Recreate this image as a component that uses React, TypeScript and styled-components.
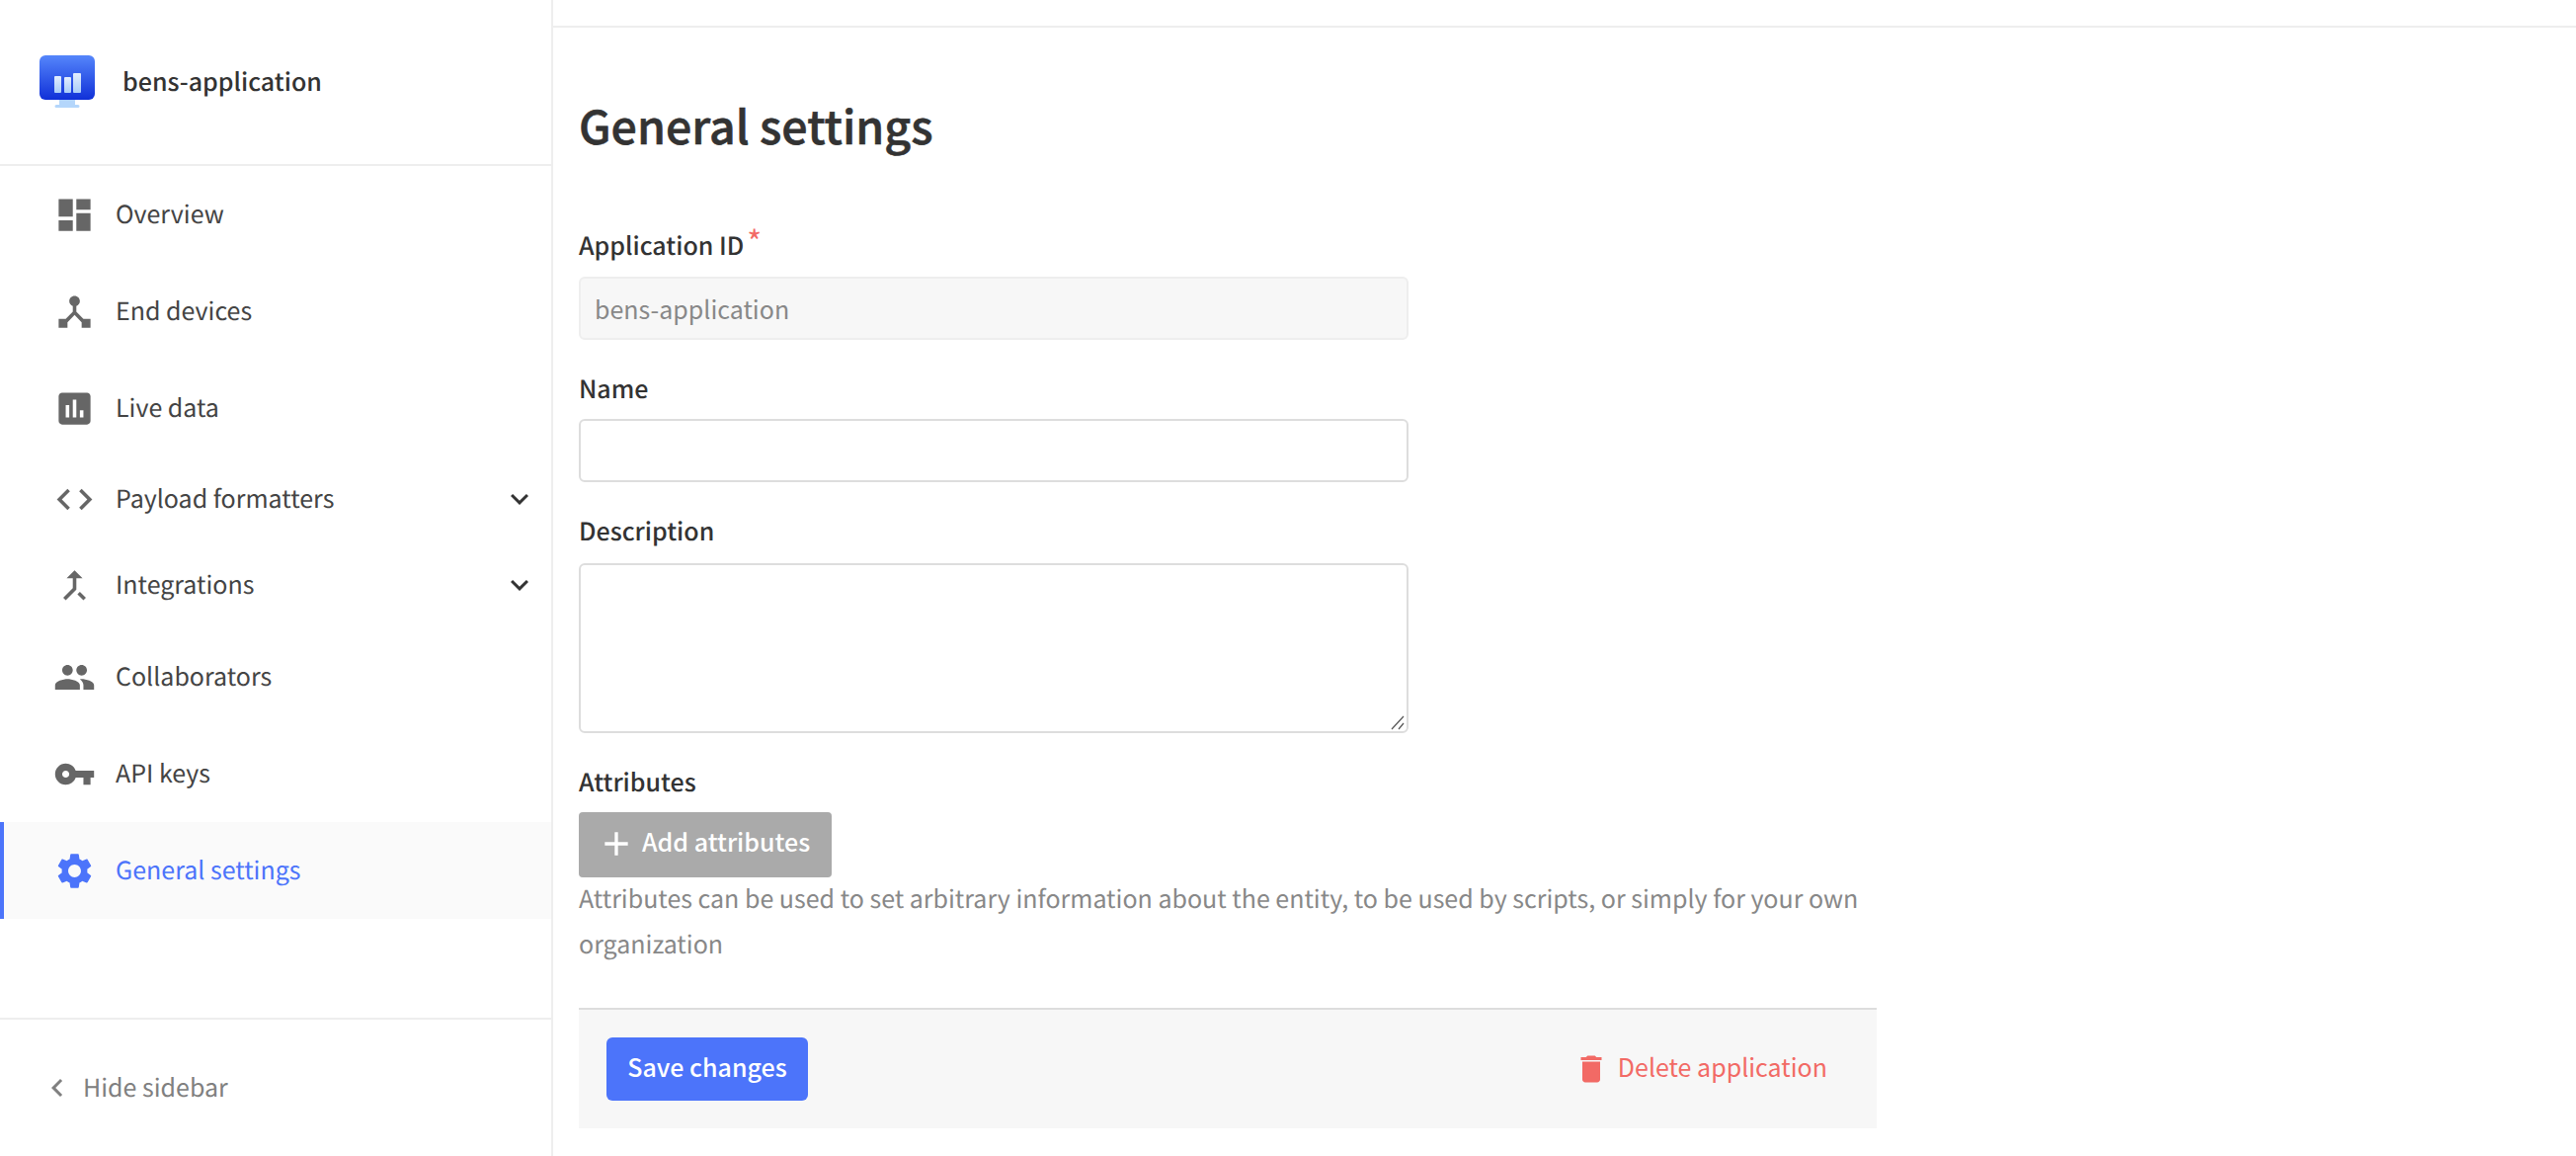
import React from "react";
import styled, { createGlobalStyle } from "styled-components";

const GlobalStyle = createGlobalStyle`
    html, body {
        margin: 0;
        padding: 0;
        background: #fff;
    }
    body {
        font-family: "Noto Sans CJK SC", "Noto Sans", sans-serif;
        font-size: 25px;
        color: #333;
        text-rendering: geometricPrecision;
    }
    * {
        box-sizing: border-box;
    }
`;

const ICONS = {
    dashboard: "M3 13h8V3H3v10zm0 8h8v-6H3v6zm10 0h8V11h-8v10zm0-18v6h8V3h-8z",
    hub: "M17 16l-4-4V8.82C14.16 8.4 15 7.3 15 6c0-1.66-1.34-3-3-3S9 4.34 9 6c0 1.3.84 2.4 2 2.82V12l-4 4H3v5h5v-3.05l4-4.2 4 4.2V21h5v-5h-4z",
    poll: "M19 3H5c-1.1 0-2 .9-2 2v14c0 1.1.9 2 2 2h14c1.1 0 2-.9 2-2V5c0-1.1-.9-2-2-2zM9 17H7v-7h2v7zm4 0h-2V7h2v10zm4 0h-2v-4h2v4z",
    code: "M9.4 16.6L4.8 12l4.6-4.6L8 6l-6 6 6 6 1.4-1.4zm5.2 0l4.6-4.6-4.6-4.6L16 6l6 6-6 6-1.4-1.4z",
    merge: "M17 20.41L18.41 19 15 15.59 13.59 17 17 20.41zM7.5 8H11v5.59L5.59 19 7 20.41l6-6V8h3.5L12 3.5 7.5 8z",
    group: "M16 11c1.66 0 2.99-1.34 2.99-3S17.66 5 16 5c-1.66 0-3 1.34-3 3s1.34 3 3 3zm-8 0c1.66 0 2.99-1.34 2.99-3S9.66 5 8 5C6.34 5 5 6.34 5 8s1.34 3 3 3zm0 2c-2.33 0-7 1.17-7 3.5V19h14v-2.5c0-2.33-4.67-3.5-7-3.5zm8 0c-.29 0-.62.02-.97.05 1.16.84 1.97 1.97 1.97 3.45V19h6v-2.5c0-2.33-4.67-3.5-7-3.5z",
    key: "M12.65 10C11.83 7.67 9.61 6 7 6c-3.31 0-6 2.69-6 6s2.69 6 6 6c2.61 0 4.83-1.67 5.65-4H17v4h4v-4h2v-4H12.65zM7 14c-1.1 0-2-.9-2-2s.9-2 2-2 2 .9 2 2-.9 2-2 2z",
    settings: "M19.14 12.94c.04-.3.06-.61.06-.94 0-.32-.02-.64-.07-.94l2.03-1.58c.18-.14.23-.41.12-.61l-1.92-3.32c-.12-.22-.37-.29-.59-.22l-2.39.96c-.5-.38-1.03-.7-1.62-.94l-.36-2.54c-.04-.24-.24-.41-.48-.41h-3.84c-.24 0-.43.17-.47.41l-.36 2.54c-.59.24-1.13.57-1.62.94l-2.39-.96c-.22-.08-.47 0-.59.22L2.74 8.87c-.12.21-.08.47.12.61l2.03 1.58c-.05.3-.09.63-.09.94s.02.64.07.94l-2.03 1.58c-.18.14-.23.41-.12.61l1.92 3.32c.12.22.37.29.59.22l2.39-.96c.5.38 1.03.7 1.62.94l.36 2.54c.05.24.24.41.48.41h3.84c.24 0 .44-.17.47-.41l.36-2.54c.59-.24 1.13-.56 1.62-.94l2.39.96c.22.08.47 0 .59-.22l1.92-3.32c.12-.22.07-.47-.12-.61l-2.01-1.58zM12 15.6c-1.98 0-3.6-1.62-3.6-3.6s1.62-3.6 3.6-3.6 3.6 1.62 3.6 3.6-1.62 3.6-3.6 3.6z",
    down: "M7.41 8.59L12 13.17l4.59-4.58L18 10l-6 6-6-6 1.41-1.41z",
    left: "M15.41 16.59L10.83 12l4.58-4.59L14 6l-6 6 6 6 1.41-1.41z",
    add: "M19 13h-6v6h-2v-6H5v-2h6V5h2v6h6v2z",
    trash: "M6 19c0 1.1.9 2 2 2h8c1.1 0 2-.9 2-2V7H6v12zM19 4h-3.5l-1-1h-5l-1 1H5v2h14V4z",
};

const NAV_ITEMS = [
    { label: "Overview", icon: ICONS.dashboard, height: 98 },
    { label: "End devices", icon: ICONS.hub, height: 98 },
    { label: "Live data", icon: ICONS.poll, height: 98 },
    { label: "Payload formatters", icon: ICONS.code, height: 86, expandable: true },
    { label: "Integrations", icon: ICONS.merge, height: 88, expandable: true },
    { label: "Collaborators", icon: ICONS.group, height: 98 },
    { label: "API keys", icon: ICONS.key, height: 98 },
    { label: "General settings", icon: ICONS.settings, height: 98, active: true },
];

const Icon = ({ path, size, color }: { path: string; size: number; color: string }) => (
    <svg width={size} height={size} viewBox="0 0 24 24" fill={color} style={{ flex: "none" }}>
        <path d={path} />
    </svg>
);

const AppLogo = () => (
    <svg width="56" height="54" viewBox="0 0 56 54" style={{ flex: "none" }}>
        <defs>
            <linearGradient id="screen" x1="0" y1="0" x2="0" y2="1">
                <stop offset="0" stopColor="#5586fb" />
                <stop offset="1" stopColor="#1030d8" />
            </linearGradient>
            <linearGradient id="bar" x1="0" y1="0" x2="0" y2="1">
                <stop offset="0" stopColor="#e4eefe" />
                <stop offset="1" stopColor="#a9cdf8" />
            </linearGradient>
        </defs>
        <path d="M20 44h16v6h3a1.5 1.5 0 0 1 0 3H17a1.5 1.5 0 0 1 0-3h3z" fill="#b4d6fb" />
        <rect x="0" y="0" width="56" height="45" rx="6" fill="url(#screen)" />
        <rect x="15" y="21" width="7" height="17" rx="1" fill="url(#bar)" />
        <rect x="25" y="22" width="7" height="16" rx="1" fill="url(#bar)" />
        <rect x="34" y="18" width="8" height="20" rx="1" fill="url(#bar)" />
    </svg>
);

export default function App() {
    return (
        <Page>
            <GlobalStyle />
            <Sidebar>
                <SidebarHeader>
                    <AppLogo />
                    <AppName>bens-application</AppName>
                </SidebarHeader>
                <NavList>
                    {NAV_ITEMS.map((item) => (
                        <NavRow key={item.label} $height={item.height} $active={item.active}>
                            <Icon path={item.icon} size={43} color={item.active ? "#4c74fa" : "#666"} />
                            <NavLabel>{item.label}</NavLabel>
                            {item.expandable && (
                                <NavChevron>
                                    <Icon path={ICONS.down} size={36} color="#333" />
                                </NavChevron>
                            )}
                        </NavRow>
                    ))}
                </NavList>
                <SidebarFooter>
                    <Icon path={ICONS.left} size={36} color="#808080" />
                    <HideLabel>Hide sidebar</HideLabel>
                </SidebarFooter>
            </Sidebar>
            <Main>
                <TopBar />
                <Content>
                    <Title>General settings</Title>
                    <FieldLabel $top={71}>
                        Application ID<Required>*</Required>
                    </FieldLabel>
                    <TextInput $top={14} disabled value="bens-application" readOnly />
                    <FieldLabel $top={31}>Name</FieldLabel>
                    <TextInput $top={13} />
                    <FieldLabel $top={31}>Description</FieldLabel>
                    <AreaWrap>
                        <TextArea />
                        <ResizeGrip width="16" height="16" viewBox="0 0 16 16">
                            <path d="M2 15L14 2M9 15L14 9" stroke="#555" strokeWidth="1.2" fill="none" />
                        </ResizeGrip>
                    </AreaWrap>
                    <FieldLabel $top={31}>Attributes</FieldLabel>
                    <AddButton type="button">
                        <Icon path={ICONS.add} size={40} color="#fff" />
                        <ButtonText>Add attributes</ButtonText>
                    </AddButton>
                    <HelpText>
                        Attributes can be used to set arbitrary information about the entity, to be used by
                        scripts, or simply for your own organization
                    </HelpText>
                    <SubmitBar>
                        <SaveButton type="button">
                            <ButtonText>Save changes</ButtonText>
                        </SaveButton>
                        <DeleteButton type="button">
                            <Icon path={ICONS.trash} size={36} color="#f26a65" />
                            <ButtonText>Delete application</ButtonText>
                        </DeleteButton>
                    </SubmitBar>
                </Content>
            </Main>
        </Page>
    );
}

const Page = styled.div`
    display: flex;
    width: 2608px;
    height: 1170px;
    overflow: hidden;
    background: #fff;
`;

const Sidebar = styled.aside`
    width: 560px;
    flex: none;
    display: flex;
    flex-direction: column;
    border-right: 2px solid #eee;
`;

const SidebarHeader = styled.div`
    height: 168px;
    flex: none;
    display: flex;
    align-items: center;
    gap: 28px;
    padding: 0 0 0 40px;
    border-bottom: 2px solid #eee;
`;

const AppName = styled.div`
    font-size: 25px;
    font-weight: 500;
    line-height: 36px;
    color: #333;
    margin-top: -2px;
`;

const NavList = styled.nav`
    flex: 1;
`;

const NavRow = styled.div<{ $height: number; $active?: boolean }>`
    height: ${(p) => p.$height}px;
    display: flex;
    align-items: center;
    gap: 20px;
    padding: 0 14px 0 ${(p) => (p.$active ? 50 : 54)}px;
    background: ${(p) => (p.$active ? "#fafafa" : "transparent")};
    border-left: ${(p) => (p.$active ? "4px solid #4c74fa" : "none")};
    color: ${(p) => (p.$active ? "#4c74fa" : "#444")};
`;

const NavLabel = styled.span`
    font-size: 25px;
    line-height: 36px;
    margin-top: -3px;
`;

const NavChevron = styled.span`
    margin-left: auto;
    display: flex;
`;

const SidebarFooter = styled.div`
    height: 140px;
    flex: none;
    display: flex;
    align-items: center;
    gap: 8px;
    padding: 0 0 0 40px;
    border-top: 2px solid #eee;
`;

const HideLabel = styled.span`
    font-size: 25px;
    line-height: 36px;
    color: #808080;
    margin-top: -3px;
`;

const Main = styled.main`
    flex: 1;
    display: flex;
    flex-direction: column;
`;

const TopBar = styled.div`
    height: 28px;
    flex: none;
    border-bottom: 2px solid #eee;
`;

const Content = styled.div`
    width: 1314px;
    margin-left: 26px;
    display: flex;
    flex-direction: column;
`;

const Title = styled.h1`
    margin: 67px 0 0;
    font-size: 46.5px;
    font-weight: 500;
    -webkit-text-stroke: 0.6px #333;
    line-height: 64px;
    color: #333;
`;

const FieldLabel = styled.label<{ $top: number }>`
    display: block;
    margin-top: ${(p) => p.$top}px;
    font-size: 25px;
    font-weight: 500;
    line-height: 36px;
    color: #333;
`;

const Required = styled.span`
    color: #f26a65;
    margin-left: 3px;
    font-size: 32px;
    font-weight: 400;
    line-height: 0;
    position: relative;
    top: -1px;
`;

const TextInput = styled.input<{ $top: number }>`
    display: block;
    width: 840px;
    height: 64px;
    margin-top: ${(p) => p.$top}px;
    padding: 0 14px;
    border: 2px solid #ddd;
    border-radius: 6px;
    background: #fff;
    font: inherit;
    outline: none;

    &:disabled {
        background: #f7f7f7;
        border-color: #eee;
        color: #888;
    }
`;

const AreaWrap = styled.div`
    position: relative;
    width: 840px;
    height: 172px;
    margin-top: 15px;
`;

const TextArea = styled.textarea`
    display: block;
    width: 100%;
    height: 100%;
    border: 2px solid #ddd;
    border-radius: 6px;
    background: #fff;
    resize: none;
    outline: none;
`;

const ResizeGrip = styled.svg`
    position: absolute;
    right: 3px;
    bottom: 3px;
`;

const ButtonText = styled.span`
    display: block;
    line-height: 36px;
    margin-top: -7px;
`;

const AddButton = styled.button`
    display: flex;
    align-items: center;
    gap: 6px;
    width: 256px;
    height: 66px;
    margin-top: 13px;
    padding: 0 0 2px 18px;
    border: none;
    border-radius: 4px;
    background: #aaa;
    color: #fff;
    font: inherit;
    font-weight: 500;
`;

const HelpText = styled.p`
    margin: -2px 0 0;
    width: 1314px;
    font-size: 25px;
    line-height: 46px;
    color: #888;
`;

const SubmitBar = styled.div`
    margin-top: 42px;
    height: 122px;
    flex: none;
    display: flex;
    align-items: center;
    justify-content: space-between;
    padding: 0 50px 0 28px;
    background: #f7f7f7;
    border-top: 2px solid #ddd;
`;

const SaveButton = styled.button`
    width: 204px;
    height: 64px;
    border: none;
    border-radius: 6px;
    background: #4c74fa;
    color: #fff;
    font: inherit;
    font-weight: 500;
`;

const DeleteButton = styled.button`
    display: flex;
    align-items: center;
    gap: 9px;
    padding: 0;
    border: none;
    background: transparent;
    color: #f26a65;
    font: inherit;
`;
